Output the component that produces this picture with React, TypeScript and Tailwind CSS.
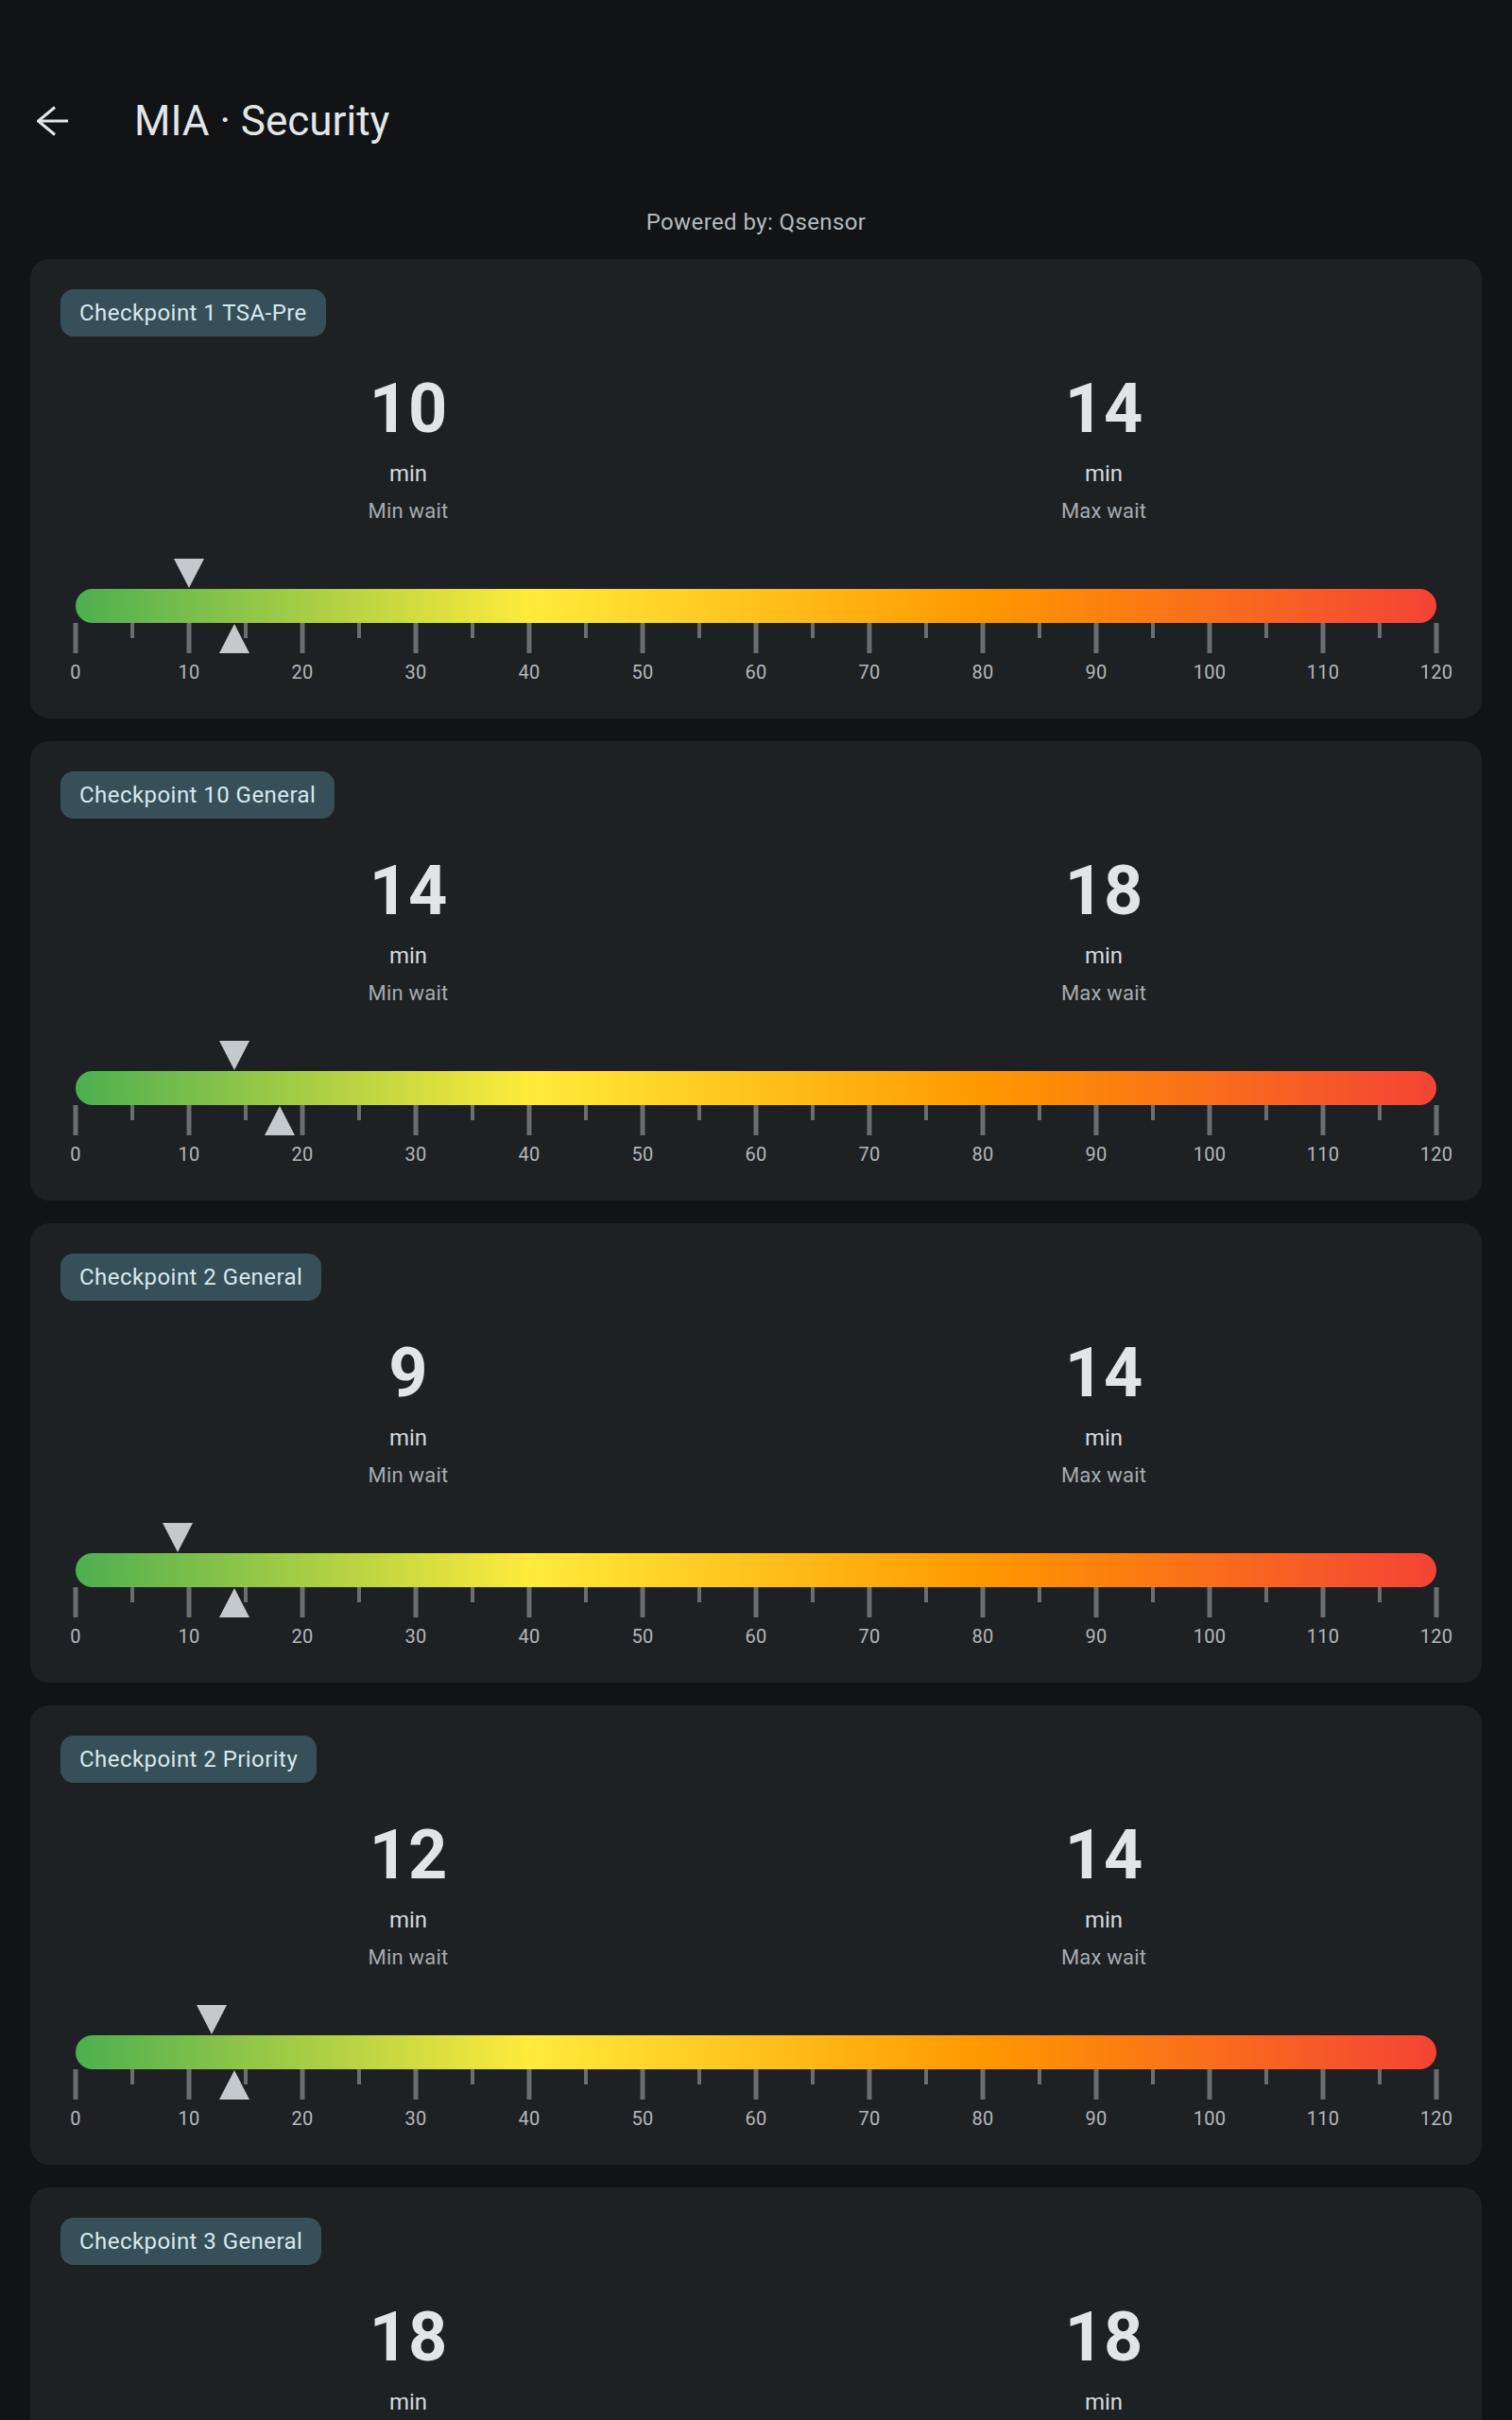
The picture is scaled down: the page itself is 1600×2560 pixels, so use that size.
import React from 'react';

type Checkpoint = { name: string; min: number; max: number };

const checkpoints: Checkpoint[] = [
  { name: 'Checkpoint 1 TSA-Pre', min: 10, max: 14 },
  { name: 'Checkpoint 10 General', min: 14, max: 18 },
  { name: 'Checkpoint 2 General', min: 9, max: 14 },
  { name: 'Checkpoint 2 Priority', min: 12, max: 14 },
  { name: 'Checkpoint 3 General', min: 18, max: 18 },
];

const SCALE_MAX = 120;
const ticks = Array.from({ length: SCALE_MAX / 5 + 1 }, (_, i) => i * 5);
const pct = (v: number) => `${(v / SCALE_MAX) * 100}%`;

function Marker({ value, up }: { value: number; up?: boolean }) {
  return (
    <svg
      width="32"
      height="31"
      viewBox="0 0 32 31"
      className={`absolute -translate-x-1/2 ${up ? 'bottom-0' : 'top-0'}`}
      style={{ left: pct(value) }}
    >
      <polygon points={up ? '16,0 32,31 0,31' : '0,0 32,0 16,31'} fill="#c4c9cd" />
    </svg>
  );
}

function Gauge({ min, max }: { min: number; max: number }) {
  return (
    <div className="mx-4 mt-[36px]">
      {/* min marker above the bar */}
      <div className="relative h-8">
        <Marker value={min} />
      </div>

      <div className="h-9 rounded-full bg-[linear-gradient(to_right,#4caf50,#ffeb3b,#ff9800,#f44336)]" />

      {/* ticks every 5 min, max marker sits over them */}
      <div className="relative h-8">
        {ticks.map((t) => (
          <div
            key={t}
            className={`absolute top-0 -translate-x-1/2 bg-[#6b6e71] ${t % 10 === 0 ? 'h-8 w-[5px]' : 'h-4 w-[4px]'}`}
            style={{ left: pct(t) }}
          />
        ))}
        <Marker value={max} up />
      </div>

      <div className="relative mt-2 h-6">
        {ticks
          .filter((t) => t % 10 === 0)
          .map((t) => (
            <span
              key={t}
              className="absolute top-0 -translate-x-1/2 text-[20px] leading-6 tracking-[0.2px] text-[#b3b7ba]"
              style={{ left: pct(t) }}
            >
              {t}
            </span>
          ))}
      </div>
    </div>
  );
}

function Stat({ value, label }: { value: number; label: string }) {
  return (
    <div className="flex flex-col items-center">
      <span className="text-[72px] font-bold leading-[72px] text-[#e2e5e8]">{value}</span>
      <span className="mt-4 text-[24px] leading-8 text-[#d5d9dc]">min</span>
      <span className="mt-[10px] text-[22px] leading-7 tracking-[0.2px] text-[#a6abaf]">{label}</span>
    </div>
  );
}

function CheckpointCard({ item }: { item: Checkpoint }) {
  return (
    <section className="rounded-[20px] bg-[#1e2124] px-8 pt-8 pb-[37px]">
      <span className="inline-flex h-[50px] items-center rounded-[14px] bg-[#374f58] px-5 text-[24px] tracking-[0.45px] text-[#d6e8ee]">
        {item.name}
      </span>
      <div className="mt-[41px] grid grid-cols-2">
        <Stat value={item.min} label="Min wait" />
        <Stat value={item.max} label="Max wait" />
      </div>
      <Gauge min={item.min} max={item.max} />
    </section>
  );
}

export default function App() {
  return (
    <div className="min-h-screen bg-[#111317] px-8 pt-[76px] pb-8 font-['Roboto',sans-serif]">
      <header className="-mx-8 flex h-[104px] items-center">
        <svg width="34" height="32" viewBox="0 0 34 32" className="ml-[39px]" fill="none" stroke="#e3e6e8" strokeWidth="3">
          <path d="M1.5 16H33" />
          <path d="M19 1.5 1.5 16 19 30.5" strokeLinejoin="miter" />
        </svg>
        <h1 className="ml-[69px] text-[44px] leading-[52px] text-[#e3e6e8]">MIA · Security</h1>
      </header>

      <p className="mt-[39px] text-center text-[24px] leading-8 tracking-[0.4px] text-[#b5babe]">Powered by: Qsensor</p>

      <div className="mt-[23px] flex flex-col gap-6">
        {checkpoints.map((c) => (
          <CheckpointCard key={c.name} item={c} />
        ))}
      </div>
    </div>
  );
}
